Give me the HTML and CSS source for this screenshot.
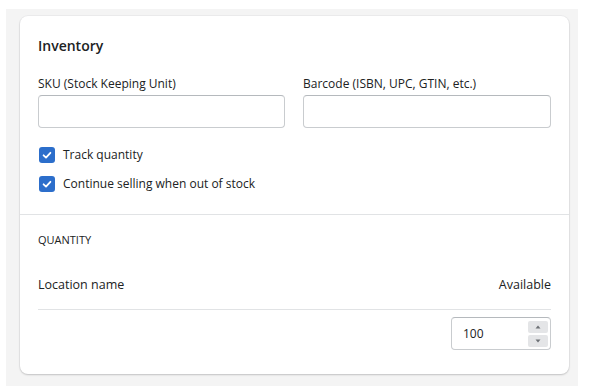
FILE: index.html
```html
<!DOCTYPE html>
<html>
<head>
<meta charset="utf-8">
<link rel="stylesheet" href="styles.css">
</head>
<body>
<div class="page">
  <div class="card">
    <section class="sec sec-top">
      <h2 class="title">Inventory</h2>
      <div class="fields">
        <div class="field">
          <div class="label">SKU (Stock Keeping Unit)</div>
          <div class="input"></div>
        </div>
        <div class="field">
          <div class="label">Barcode (ISBN, UPC, GTIN, etc.)</div>
          <div class="input"></div>
        </div>
      </div>
      <div class="checks">
        <div class="check">
          <span class="box"><svg width="16" height="16" viewBox="0 0 16 16"><path d="M4.6 8.3 L7 10.6 L11.4 5.8" fill="none" stroke="#fff" stroke-width="1.8" stroke-linecap="round" stroke-linejoin="round"/></svg></span>
          <span class="check-text">Track quantity</span>
        </div>
        <div class="check">
          <span class="box"><svg width="16" height="16" viewBox="0 0 16 16"><path d="M4.6 8.3 L7 10.6 L11.4 5.8" fill="none" stroke="#fff" stroke-width="1.8" stroke-linecap="round" stroke-linejoin="round"/></svg></span>
          <span class="check-text">Continue selling when out of stock</span>
        </div>
      </div>
    </section>
    <section class="sec sec-qty">
      <h3 class="subtitle">QUANTITY</h3>
      <div class="thead">
        <span>Location name</span>
        <span>Available</span>
      </div>
      <div class="trow">
        <div class="num">
          <span class="num-val">100</span>
          <div class="spin">
            <div class="spin-btn"><svg width="6" height="4" viewBox="0 0 6 4"><path d="M0.5 3.5 L3 0.5 L5.5 3.5 Z" fill="#6d7175"/></svg></div>
            <div class="spin-btn"><svg width="6" height="4" viewBox="0 0 6 4"><path d="M0.5 0.5 L3 3.5 L5.5 0.5 Z" fill="#6d7175"/></svg></div>
          </div>
        </div>
      </div>
    </section>
  </div>
</div>
</body>
</html>
```

FILE: styles.css
```css
* { box-sizing: border-box; }
html, body { margin: 0; padding: 0; background: #fff; }
body {
  font-family: "Open Sans", "Noto Sans", sans-serif;
  font-size: 12px;
  color: #202223;
}
.page {
  margin: 9px 0 0 6px;
  width: 572px;
  height: 377px;
  background: #f4f4f4;
  padding: 7px 9px 0 14px;
}
.card {
  background: #fff;
  border-radius: 8px;
  height: 358px;
  box-shadow: 0 1px 2px rgba(0,0,0,0.18), 0 0 0 1px rgba(63,63,68,0.04);
}
.sec { padding: 0 18px; }
.sec-top {
  padding-top: 20px;
  padding-bottom: 20px;
  border-bottom: 1px solid #e1e3e5;
}
.title {
  margin: 0;
  font-size: 14px;
  font-weight: 600;
  line-height: 20px;
}
.fields {
  margin-top: 18px;
  display: grid;
  grid-template-columns: 247px 248px;
  column-gap: 18px;
}
.label { line-height: 20px; }
.input {
  margin-top: 1px;
  height: 33px;
  border: 1px solid #c9cccf;
  border-top-color: #b5b9bd;
  border-radius: 4px;
  background: #fff;
}
.checks {
  margin-top: 17px;
  display: flex;
  flex-direction: column;
  gap: 9px;
}
.check {
  display: flex;
  align-items: center;
  height: 20px;
}
.box {
  width: 16px;
  height: 16px;
  margin-left: 1px;
  border-radius: 3px;
  background: #2c6ecb;
  display: flex;
}
.check-text { margin-left: 8px; line-height: 20px; }
.sec-qty { padding-top: 17px; }
.subtitle {
  margin: 0;
  font-size: 11px;
  font-weight: 400;
  line-height: 16px;
}
.thead {
  margin-top: 27px;
  display: flex;
  justify-content: space-between;
  font-size: 12.5px;
  font-weight: 500;
  line-height: 20px;
  padding-bottom: 14px;
  border-bottom: 1px solid #e1e3e5;
}
.trow {
  padding-top: 7px;
  display: flex;
  justify-content: flex-end;
}
.num {
  width: 100px;
  height: 33px;
  border: 1px solid #c9cccf;
  border-top-color: #b5b9bd;
  border-radius: 4px;
  display: flex;
  align-items: center;
  justify-content: space-between;
  padding: 0 2px 0 11px;
}
.num-val { line-height: 20px; }
.spin {
  display: flex;
  flex-direction: column;
  gap: 2px;
}
.spin-btn {
  width: 20px;
  height: 12px;
  background: #e4e5e7;
  border-radius: 2px;
  display: flex;
  align-items: center;
  justify-content: center;
}
```
